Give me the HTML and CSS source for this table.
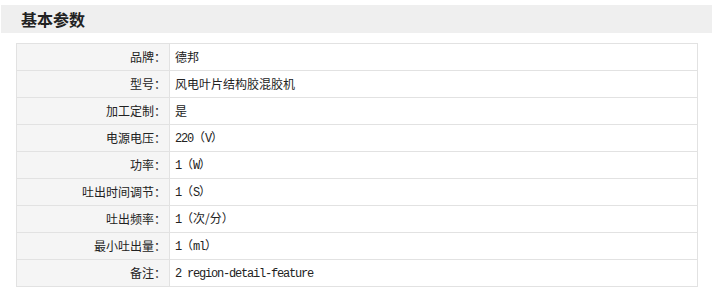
FILE: index.html
```html
<!DOCTYPE html>
<html lang="zh">
<head>
<meta charset="utf-8">
<link rel="stylesheet" href="styles.css">
</head>
<body>
<div class="panel">
  <div class="panel-head"><h2 class="panel-title">基本参数</h2></div>
  <table class="params">
    <tr><th>品牌：</th><td>德邦</td></tr>
    <tr><th>型号：</th><td>风电叶片结构胶混胶机</td></tr>
    <tr><th>加工定制：</th><td>是</td></tr>
    <tr><th>电源电压：</th><td><span class="num">220</span>（<span class="num">V</span>）</td></tr>
    <tr><th>功率：</th><td><span class="num">1</span>（<span class="num">W</span>）</td></tr>
    <tr><th>吐出时间调节：</th><td><span class="num">1</span>（<span class="num">S</span>）</td></tr>
    <tr><th>吐出频率：</th><td><span class="num">1</span>（次/分）</td></tr>
    <tr><th>最小吐出量：</th><td><span class="num">1</span>（<span class="num">ml</span>）</td></tr>
    <tr><th>备注：</th><td><span class="num">2 region-detail-feature</span></td></tr>
  </table>
</div>
</body>
</html>
```

FILE: styles.css
```css
html, body {
  margin: 0;
  padding: 0;
  background: #fff;
}
body {
  font-family: "Noto Sans CJK SC", "Liberation Sans", sans-serif;
  font-size: 12px;
  color: #333;
}
.panel {
  padding-top: 5px;
}
.panel-head {
  margin-left: 1px;
  height: 28px;
  background: #efefef;
  display: flex;
  align-items: center;
  padding-left: 20px;
}
.panel-title {
  margin: 0;
  font-size: 16px;
  font-weight: bold;
  color: #222;
  line-height: 1;
}
.params {
  margin: 10px 0 0 16px;
  width: 682px;
  border-collapse: collapse;
  table-layout: fixed;
}
.params th,
.params td {
  border: 1px solid #e2e2e2;
  height: 26px;
  padding: 0;
  line-height: 16px;
  font-size: 12px;
  font-weight: normal;
  white-space: nowrap;
  vertical-align: middle;
}
.params th {
  width: 149px;
  background: #f5f5f5;
  text-align: right;
  padding-right: 3px;
  color: #222;
}
.params td {
  text-align: left;
  padding-left: 5px;
  color: #222;
}
.num {
  font-family: "Liberation Mono", monospace;
  letter-spacing: -1.2px;
}
```
